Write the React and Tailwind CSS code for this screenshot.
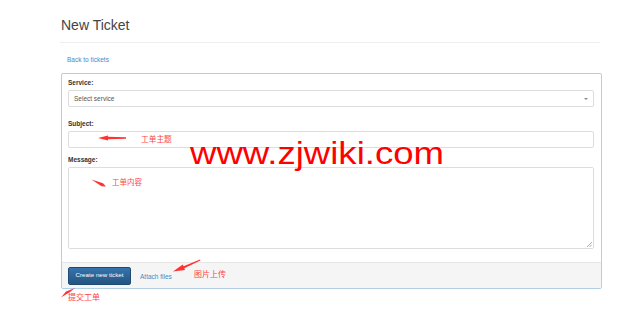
import React from 'react';

function Field({ label, children, className = '' }) {
  return (
    <div className={className}>
      <label className="block text-[6.5px] leading-[8px] font-bold text-[#333]">{label}</label>
      <div className="mt-[3px]">{children}</div>
    </div>
  );
}

function Annotations() {
  return (
    <>
      <svg className="absolute inset-0 pointer-events-none" width="640" height="312" viewBox="0 0 640 312">
        {/* subject arrow, pointing left */}
        <polygon points="126,137.3 108,136.8 108,135.6 98,138 108,140.4 108,139.2 126,138.7" fill="#f33" />
        {/* message wedge */}
        <polygon points="91.5,179.6 103,183.2 106,186.6 101.5,186.2" fill="#f33" />
        {/* attach arrow, pointing down-left */}
        <polygon points="200,259.6 183.6,266.2 182.8,264.6 173,271.6 185,270 184.3,268.3 200.4,260.6" fill="#f33" />
        {/* submit wedge */}
        <polygon points="75,288 70,292 61,297.5 66,291.6" fill="#f33" />
      </svg>
      <span className="absolute left-[190px] top-[134px] text-[31px] leading-[40px] text-[#ff0000] origin-left scale-x-[1.18] font-['Liberation_Sans',Arial,sans-serif]">
        www.zjwiki.com
      </span>
      <span className="absolute left-[141px] top-[133px] text-[7.7px] leading-[12px] text-[#f44] font-['Noto_Sans_CJK_SC',sans-serif]">工单主题</span>
      <span className="absolute left-[112px] top-[175.5px] text-[7.5px] leading-[12px] text-[#f44] font-['Noto_Sans_CJK_SC',sans-serif]">工单内容</span>
      <span className="absolute left-[194px] top-[268px] text-[8px] leading-[12px] text-[#f44] font-['Noto_Sans_CJK_SC',sans-serif]">图片上传</span>
      <span className="absolute left-[68px] top-[290.5px] text-[8px] leading-[12px] text-[#f44] font-['Noto_Sans_CJK_SC',sans-serif]">提交工单</span>
    </>
  );
}

export default function App() {
  return (
    <div className="relative w-[640px] h-[312px] bg-white overflow-hidden font-['Liberation_Sans',Arial,sans-serif]">
      <div className="pl-[61px] pt-[15px]">
        <h1 className="text-[14px] leading-[20px] text-[#444]">New Ticket</h1>
        <div className="mt-[7px] -ml-px w-[540px] border-t border-[#eee]" />

        <a className="block mt-[13px] ml-[6px] text-[6.5px] leading-[8px] text-[#428bca]">Back to tickets</a>

        <div className="mt-[9px] w-[541px] border border-[#b3cfe8] rounded-[2px] overflow-hidden">
          <div className="pl-[6px] pr-[7px] pt-[5px] pb-[13px]">
            <Field label="Service:">
              <div className="h-[17px] border border-[#ddd] rounded-[2px] bg-white flex items-center justify-between pl-[5px] pr-[5px]">
                <span className="text-[6.5px] text-[#555]">Select service</span>
                <span className="w-0 h-0 border-l-[2px] border-r-[2px] border-t-[2.5px] border-l-transparent border-r-transparent border-t-[#888]" />
              </div>
            </Field>

            <Field label="Subject:" className="mt-[13px]">
              <div className="h-[17px] border border-[#ddd] rounded-[2px] bg-white" />
            </Field>

            <Field label="Message:" className="mt-[8px]">
              <div className="relative h-[82px] border border-[#ddd] rounded-[2px] bg-white">
                <svg className="absolute right-[1px] bottom-[1px]" width="5" height="5" viewBox="0 0 5 5">
                  <path d="M5 0L0 5M5 2.5L2.5 5" stroke="#999" strokeWidth="0.8" />
                </svg>
              </div>
            </Field>
          </div>

          <div className="h-[26px] bg-[#f5f5f5] border-t border-[#e6e6e6] flex items-center pl-[6px]">
            <button className="h-[18px] w-[63px] rounded-[2px] border border-[#1f4b73] bg-gradient-to-b from-[#3673ad] to-[#245582] text-white text-[6.2px] leading-none">
              Create new ticket
            </button>
            <a className="ml-[9px] mt-[2px] text-[6.5px] text-[#428bca]">Attach files</a>
          </div>
        </div>
      </div>

      <Annotations />
    </div>
  );
}
